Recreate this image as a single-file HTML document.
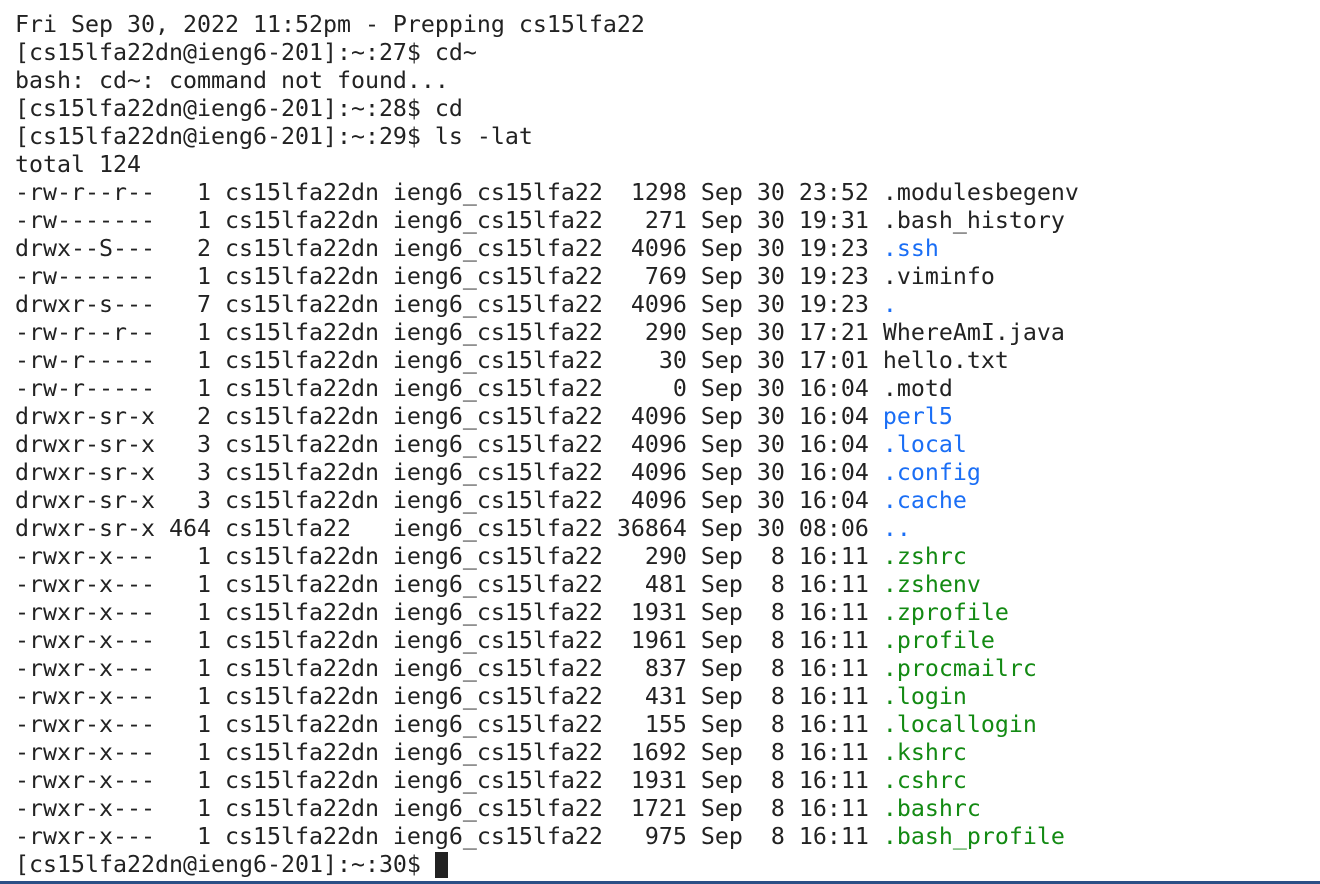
<!DOCTYPE html>
<html><head><style>
body{margin:0;width:1320px;height:884px;background:#fff;overflow:hidden;position:relative}
pre{position:absolute;left:15px;top:11px;margin:0;font-family:"DejaVu Sans Mono","Liberation Mono",monospace;font-size:23.25px;line-height:28px;color:#222;letter-spacing:0}
.b{color:#1a6ef5}.g{color:#138a13}
.c{display:inline-block;width:13px;height:26px;background:#222;vertical-align:-6px}
.ln{position:absolute;left:0;top:881px;width:1320px;height:3px;background:#2b4f86}
</style></head><body>
<pre>Fri Sep 30, 2022 11:52pm - Prepping cs15lfa22
[cs15lfa22dn@ieng6-201]:~:27$ cd~
bash: cd~: command not found...
[cs15lfa22dn@ieng6-201]:~:28$ cd
[cs15lfa22dn@ieng6-201]:~:29$ ls -lat
total 124
-rw-r--r--   1 cs15lfa22dn ieng6_cs15lfa22  1298 Sep 30 23:52 .modulesbegenv
-rw-------   1 cs15lfa22dn ieng6_cs15lfa22   271 Sep 30 19:31 .bash_history
drwx--S---   2 cs15lfa22dn ieng6_cs15lfa22  4096 Sep 30 19:23 <span class="b">.ssh</span>
-rw-------   1 cs15lfa22dn ieng6_cs15lfa22   769 Sep 30 19:23 .viminfo
drwxr-s---   7 cs15lfa22dn ieng6_cs15lfa22  4096 Sep 30 19:23 <span class="b">.</span>
-rw-r--r--   1 cs15lfa22dn ieng6_cs15lfa22   290 Sep 30 17:21 WhereAmI.java
-rw-r-----   1 cs15lfa22dn ieng6_cs15lfa22    30 Sep 30 17:01 hello.txt
-rw-r-----   1 cs15lfa22dn ieng6_cs15lfa22     0 Sep 30 16:04 .motd
drwxr-sr-x   2 cs15lfa22dn ieng6_cs15lfa22  4096 Sep 30 16:04 <span class="b">perl5</span>
drwxr-sr-x   3 cs15lfa22dn ieng6_cs15lfa22  4096 Sep 30 16:04 <span class="b">.local</span>
drwxr-sr-x   3 cs15lfa22dn ieng6_cs15lfa22  4096 Sep 30 16:04 <span class="b">.config</span>
drwxr-sr-x   3 cs15lfa22dn ieng6_cs15lfa22  4096 Sep 30 16:04 <span class="b">.cache</span>
drwxr-sr-x 464 cs15lfa22   ieng6_cs15lfa22 36864 Sep 30 08:06 <span class="b">..</span>
-rwxr-x---   1 cs15lfa22dn ieng6_cs15lfa22   290 Sep  8 16:11 <span class="g">.zshrc</span>
-rwxr-x---   1 cs15lfa22dn ieng6_cs15lfa22   481 Sep  8 16:11 <span class="g">.zshenv</span>
-rwxr-x---   1 cs15lfa22dn ieng6_cs15lfa22  1931 Sep  8 16:11 <span class="g">.zprofile</span>
-rwxr-x---   1 cs15lfa22dn ieng6_cs15lfa22  1961 Sep  8 16:11 <span class="g">.profile</span>
-rwxr-x---   1 cs15lfa22dn ieng6_cs15lfa22   837 Sep  8 16:11 <span class="g">.procmailrc</span>
-rwxr-x---   1 cs15lfa22dn ieng6_cs15lfa22   431 Sep  8 16:11 <span class="g">.login</span>
-rwxr-x---   1 cs15lfa22dn ieng6_cs15lfa22   155 Sep  8 16:11 <span class="g">.locallogin</span>
-rwxr-x---   1 cs15lfa22dn ieng6_cs15lfa22  1692 Sep  8 16:11 <span class="g">.kshrc</span>
-rwxr-x---   1 cs15lfa22dn ieng6_cs15lfa22  1931 Sep  8 16:11 <span class="g">.cshrc</span>
-rwxr-x---   1 cs15lfa22dn ieng6_cs15lfa22  1721 Sep  8 16:11 <span class="g">.bashrc</span>
-rwxr-x---   1 cs15lfa22dn ieng6_cs15lfa22   975 Sep  8 16:11 <span class="g">.bash_profile</span>
[cs15lfa22dn@ieng6-201]:~:30$ <span class="c"></span></pre>
<div class="ln"></div>
</body></html>
